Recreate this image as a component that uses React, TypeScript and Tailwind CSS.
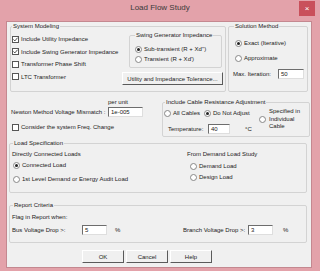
import React from 'react';

const Check = ({ checked, label }: { checked?: boolean; label: string }) => (
  <div className="flex items-center h-[8px]">
    <span className="w-[7px] h-[7px] border border-[#555] bg-white flex items-center justify-center shrink-0">
      {checked && (
        <svg viewBox="0 0 7 7" className="w-[5px] h-[5px]">
          <path d="M0.6 3.4 L2.6 5.5 L6.4 1" stroke="#222" strokeWidth="1.1" fill="none" />
        </svg>
      )}
    </span>
    <span className="ml-[2px] whitespace-nowrap">{label}</span>
  </div>
);

const Radio = ({ on, label, className = '' }: { on?: boolean; label?: string; className?: string }) => (
  <div className={`flex items-center h-[8px] ${className}`}>
    <span className="w-[7px] h-[7px] rounded-full border border-[#888] bg-white flex items-center justify-center shrink-0">
      {on && <span className="w-[3px] h-[3px] rounded-full bg-[#222]" />}
    </span>
    {label && <span className="ml-[2px] whitespace-nowrap">{label}</span>}
  </div>
);

const Field = ({ value, className = '' }: { value: string; className?: string }) => (
  <div
    className={`h-[10px] bg-white border border-t-[#6d6d6d] border-l-[#6d6d6d] border-b-[#dedede] border-r-[#dedede] pl-[2px] leading-[8px] ${className}`}
  >
    {value}
  </div>
);

const Group = ({
  label,
  labelPos,
  className,
  children,
}: {
  label: string;
  labelPos: string;
  className: string;
  children?: React.ReactNode;
}) => (
  <div className={`relative border border-[#d3d3d3] rounded-[2px] ${className}`}>
    <span className={`absolute top-[-5px] bg-[#f0f0f0] px-[1px] leading-[8px] whitespace-nowrap ${labelPos}`}>
      {label}
    </span>
    {children}
  </div>
);

const Btn = ({ label, className = '' }: { label: string; className?: string }) => (
  <button
    className={`h-[13px] bg-[#f0f0f0] border border-t-white border-l-white border-b-[#5a5a5a] border-r-[#5a5a5a] leading-[8px] text-[6px] text-[#222] ${className}`}
  >
    {label}
  </button>
);

export default function App() {
  return (
    <div className="w-[320px] h-[271px] bg-[#e3a2aa] flex flex-col text-[#222] font-['Liberation_Sans',Arial,sans-serif] overflow-hidden">
      {/* title bar */}
      <div className="h-[22px] relative flex justify-center pt-[4px] shrink-0">
        <span className="text-[8px] leading-[8px] text-[#3a3a3a]">Load Flow Study</span>
        <div className="absolute right-[5px] top-[1px] w-[16px] h-[15px] bg-[#c9505b] flex items-center justify-center text-white text-[8px] leading-[8px]">
          ×
        </div>
      </div>

      {/* client area */}
      <div className="ml-[7px] w-[304px] h-[245px] bg-[#f0f0f0] text-[6px] leading-[8px] outline outline-1 outline-[#c48890] flex flex-col">
        {/* row 1 */}
        <div className="flex mt-[4px]">
          <Group label="System Modeling" labelPos="left-[1px]" className="ml-[3px] w-[216px] h-[66px] flex">
            <div className="pl-[1px] pt-[8px] flex flex-col gap-[4.5px]">
              <Check checked label="Include Utility  Impedance" />
              <Check checked label="Include Swing Generator Impedance" />
              <Check label="Transformer Phase Shift" />
              <Check label="LTC Transformer" />
            </div>
            <div className="ml-auto mr-[2px] w-[101px] pt-[8px] flex flex-col">
              <Group label="Swing Generator Impedance" labelPos="left-[5px]" className="ml-[7px] w-[93px] h-[33px]">
                <div className="pl-[5px] pt-[9px] flex flex-col gap-[2px]">
                  <Radio on label="Sub-transient (R + Xd'')" />
                  <Radio label="Transient  (R + Xd')" />
                </div>
              </Group>
              <Btn label="Utility and Impedance Tolerance..." className="mt-[4px] w-full" />
            </div>
          </Group>

          <Group label="Solution Method" labelPos="left-[5px]" className="ml-[2px] w-[80px] h-[66px]">
            <div className="pl-[6px] pt-[12px] flex flex-col gap-[7px]">
              <Radio on label="Exact (Iterative)" />
              <Radio label="Approximate" />
            </div>
            <div className="flex items-center mt-[7px] pl-[4px] h-[10px]">
              <span>Max. Iteration:</span>
              <Field value="50" className="ml-auto mr-[3px] w-[26px]" />
            </div>
          </Group>
        </div>

        {/* row 2 */}
        <div className="flex h-[51px]">
          <div className="flex flex-col pt-[6px]">
            <span className="ml-[101px]">per unit</span>
            <div className="flex items-center mt-[1px] h-[10px]">
              <span className="ml-[4px] w-[97px] whitespace-nowrap">Newton Method Voltage Mismatch :</span>
              <Field value="1e-005" className="w-[35px]" />
            </div>
            <div className="ml-[5px] mt-[6px]">
              <Check label="Consider the system Freq. Change" />
            </div>
          </div>

          <Group
            label="Include Cable Resistance Adjustment"
            labelPos="left-[2px]"
            className="ml-auto mr-[1px] mt-[10px] w-[148px] h-[35px] flex"
          >
            <div className="w-[96px] pl-[1px] pt-[6px] flex flex-col">
              <div className="flex">
                <Radio label="All Cables" className="w-[40px]" />
                <Radio on label="Do Not Adjust" />
              </div>
              <div className="flex items-center mt-[7px] h-[10px] pl-[4px]">
                <span className="w-[40px]">Temperature:</span>
                <Field value="40" className="w-[22px]" />
                <span className="ml-[15px]">°C</span>
              </div>
            </div>
            <div className="flex items-center pt-[5px] self-start">
              <Radio />
              <span className="ml-[3px] leading-[7.5px]">
                Specified in
                <br />
                Individual
                <br />
                Cable
              </span>
            </div>
          </Group>
        </div>

        {/* row 3 */}
        <Group label="Load  Specification" labelPos="left-[3px]" className="ml-[2px] w-[298px] h-[50px] flex">
          <div className="w-[177px] pl-[2px] pt-[6px] flex flex-col">
            <span>Directly Connected Loads</span>
            <div className="ml-[1px] mt-[3px] flex flex-col gap-[6px]">
              <Radio on label="Connected Load" />
              <Radio label="1st Level Demand or Energy Audit Load" />
            </div>
          </div>
          <div className="pt-[6px] flex flex-col">
            <span>From Demand Load  Study</span>
            <div className="ml-[3px] mt-[4px] flex flex-col gap-[3px]">
              <Radio label="Demand Load" />
              <Radio label="Design Load" />
            </div>
          </div>
        </Group>

        {/* row 4 */}
        <Group label="Report Criteria" labelPos="left-[3px]" className="ml-[2px] mt-[12px] w-[298px] h-[38px]">
          <div className="pl-[2px] pt-[7px] flex flex-col">
            <span>Flag in Report when:</span>
            <div className="flex items-center mt-[4px] h-[10px]">
              <div className="w-[171px] flex items-center">
                <span className="w-[70px]">Bus Voltage Drop &gt;:</span>
                <Field value="5" className="w-[25px]" />
                <span className="ml-[8px]">%</span>
              </div>
              <span className="w-[65px] whitespace-nowrap">Branch Voltage Drop &gt;:</span>
              <Field value="3" className="w-[25px]" />
              <span className="ml-[10px]">%</span>
            </div>
          </div>
        </Group>

        {/* buttons */}
        <div className="flex gap-[2px] ml-[75px] mt-[7px]">
          <Btn label="OK" className="w-[42px]" />
          <Btn label="Cancel" className="w-[42px]" />
          <Btn label="Help" className="w-[42px]" />
        </div>
      </div>
    </div>
  );
}
